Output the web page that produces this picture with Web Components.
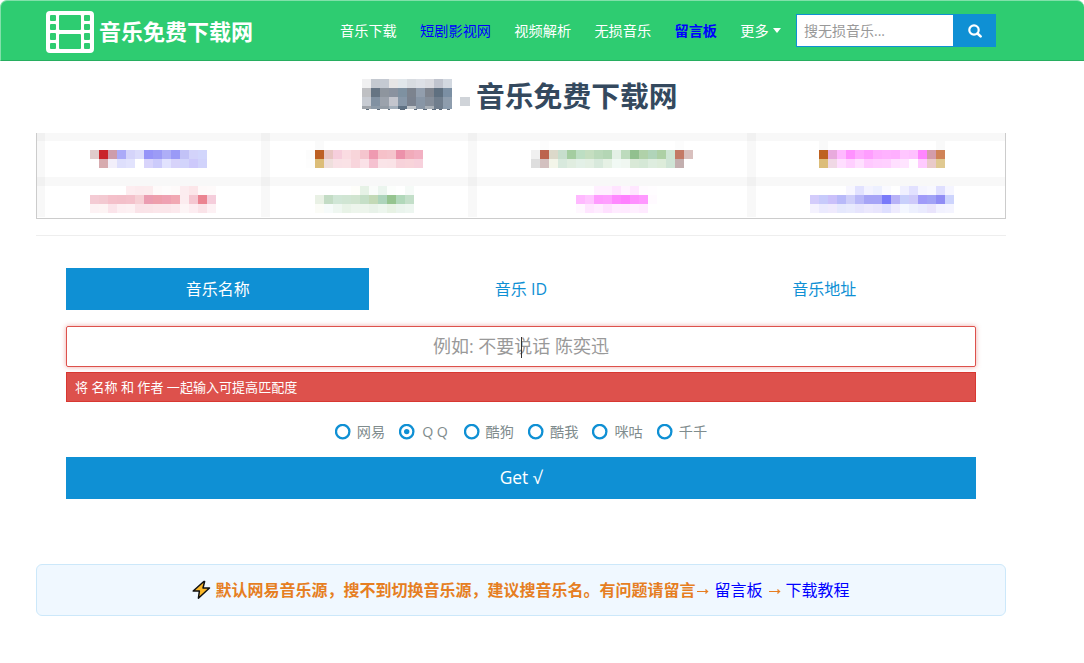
<!DOCTYPE html>
<html lang="zh-CN">
<head>
<meta charset="utf-8">
<title>音乐免费下载网</title>
<style>
  * { box-sizing: border-box; }
  body {
    margin: 0;
    background: #fff;
    color: #34495e;
    font-family: "Open Sans", "Noto Sans CJK SC", sans-serif;
    font-size: 16px;
    --blue: #0f90d4;
    --green: #2ecc71;
    --red: #dd514c;
  }
  main { display: block; width: 970px; margin-left: 36px; }
</style>
</head>
<body>
<site-header>
  <site-logo slot="logo">音乐免费下载网</site-logo>
  <nav-item>音乐下载</nav-item>
  <nav-item kind="link">短剧影视网</nav-item>
  <nav-item>视频解析</nav-item>
  <nav-item>无损音乐</nav-item>
  <nav-item kind="link strong">留言板</nav-item>
  <nav-item kind="more">更多</nav-item>
  <search-box slot="search" placeholder="搜无损音乐..."></search-box>
</site-header>
<main>
  <page-title>音乐免费下载网</page-title>
  <link-board></link-board>
  <search-form>
    <tab-item slot="tabs" active>音乐名称</tab-item>
    <tab-item slot="tabs">音乐 ID</tab-item>
    <tab-item slot="tabs">音乐地址</tab-item>
    <music-input slot="field" placeholder="例如: 不要说话 陈奕迅"></music-input>
    <form-alert slot="field">将 名称 和 作者 一起输入可提高匹配度</form-alert>
    <source-radio slot="sources">网易</source-radio>
    <source-radio slot="sources" checked wide>QQ</source-radio>
    <source-radio slot="sources">酷狗</source-radio>
    <source-radio slot="sources">酷我</source-radio>
    <source-radio slot="sources">咪咕</source-radio>
    <source-radio slot="sources">千千</source-radio>
    <submit-button slot="submit">Get √</submit-button>
  </search-form>
  <site-notice>
    默认网易音乐源，搜不到切换音乐源，建议搜音乐名。有问题请留言
    <notice-link slot="links" to="留言板"></notice-link>
    <notice-link slot="links" to="下载教程" spaced></notice-link>
  </site-notice>
</main>
<script>
"use strict";

const define = (name, render) => {
  customElements.define(name, class extends HTMLElement {
    constructor() {
      super();
      this.attachShadow({ mode: "open" });
    }

    connectedCallback() {
      this.shadowRoot.innerHTML = render(this);
    }
  });
};

// Draws runs of square cells; every run is [column, y, "color color ..."]
const drawCells = (runs, size = 9) => runs.map(([col, y, colors, h = size]) =>
  colors.split(" ").map((c, i) => c === "-" ? "" :
    `<rect x="${(col + i) * size}" y="${y}" width="${size}" height="${h}" fill="#${c}"/>`
  ).join("")
).join("");

define("site-header", () => `
  <style>
    :host {
      display: flex;
      align-items: center;
      box-sizing: border-box;
      height: 61px;
      padding-left: 45px;
      background: var(--green);
      border-top: 1px solid #82e0aa;
      border-left: 1px solid #82e0aa;
      border-bottom: 1px solid #27ae60;
      border-radius: 7px 7px 0 0;
    }
    .logo { width: 294px; }
    nav { display: flex; gap: 23.3px; width: 456px; }
  </style>
  <div class="logo"><slot name="logo"></slot></div>
  <nav><slot></slot></nav>
  <slot name="search"></slot>
`);

define("site-logo", () => `
  <style>
    :host {
      display: flex;
      align-items: center;
      gap: 5px;
      color: #fff;
      font-size: 22px;
      font-weight: bold;
      line-height: 42px;
      white-space: nowrap;
    }
    svg { display: block; margin-top: 2px; }
  </style>
  <svg width="48" height="42" viewBox="0 0 48 42">
    <path fill="#fff" fill-rule="evenodd" d="M4 0H44Q48 0 48 4V38Q48 42 44 42H4Q0 42 0 38V4Q0 0 4 0Z
      M5 4h4q1 0 1 1v4q0 1-1 1H5q-1 0-1-1V5q0-1 1-1Z M5 13h4q1 0 1 1v4q0 1-1 1H5q-1 0-1-1v-4q0-1 1-1Z
      M5 22h4q1 0 1 1v5q0 1-1 1H5q-1 0-1-1v-5q0-1 1-1Z M5 32h4q1 0 1 1v4q0 1-1 1H5q-1 0-1-1v-4q0-1 1-1Z
      M39 4h4q1 0 1 1v4q0 1-1 1h-4q-1 0-1-1V5q0-1 1-1Z M39 13h4q1 0 1 1v4q0 1-1 1h-4q-1 0-1-1v-4q0-1 1-1Z
      M39 22h4q1 0 1 1v5q0 1-1 1h-4q-1 0-1-1v-5q0-1 1-1Z M39 32h4q1 0 1 1v4q0 1-1 1h-4q-1 0-1-1v-4q0-1 1-1Z
      M14 4H34q1 0 1 1V18q0 1-1 1H14q-1 0-1-1V5q0-1 1-1Z M14 23H34q1 0 1 1V37q0 1-1 1H14q-1 0-1-1V24q0-1 1-1Z"/>
  </svg>
  <slot></slot>
`);

define("nav-item", el => {
  const kind = el.getAttribute("kind") || "";
  return `
    <style>
      :host {
        display: flex;
        align-items: center;
        gap: 4px;
        flex: none;
        color: ${kind.includes("link") ? "#00f" : "#fff"};
        font-size: 14.2px;
        font-weight: ${kind.includes("strong") ? "bold" : "normal"};
        line-height: 20px;
        white-space: nowrap;
      }
      i {
        border: solid transparent;
        border-width: 5px 4.5px 0;
        border-top-color: #fff;
      }
    </style>
    <slot></slot>${kind.includes("more") ? "<i></i>" : ""}
  `;
});

define("search-box", el => `
  <style>
    :host { display: flex; box-sizing: border-box; width: 200px; height: 33px; }
    .field {
      box-sizing: border-box;
      width: 157px;
      padding-left: 7px;
      border: 1px solid var(--blue);
      border-right: 0;
      background: #fff;
      color: #999;
      font-size: 14px;
      line-height: 32px;
    }
    .button {
      display: flex;
      align-items: center;
      justify-content: center;
      width: 43px;
      background: var(--blue);
    }
  </style>
  <div class="field">${el.getAttribute("placeholder")}</div>
  <div class="button">
    <svg width="14" height="14" viewBox="0 0 14 14" fill="none" stroke="#fff">
      <circle cx="6" cy="6" r="4.7" stroke-width="2.2"/>
      <path d="M9.5 9.5L12.6 12.4" stroke-width="2.6" stroke-linecap="round"/>
    </svg>
  </div>
`);

define("page-title", () => `
  <style>
    :host {
      display: flex;
      align-items: center;
      box-sizing: border-box;
      height: 72px;
      padding: 0 0 2px 326px;
      font-size: 28.8px;
      font-weight: bold;
      line-height: 40px;
      white-space: nowrap;
    }
    svg { display: block; margin: -4px 6px 0 0; }
  </style>
  <svg width="108" height="31" shape-rendering="crispEdges">
    ${drawCells([
      [0, 0, "f0f0f1 c4c9d0 c5cad2 e7e6e6 e1e7eb d8dce1 dde0e6 dadbe0 c0c4ce d2d8e0"],
      [0, 9, "bfc0c3 657483 8e959e 8a929f 7e91a1 7c838e 929ead 7e848e 5f7080 7b8fa3"],
      [0, 18, "c7cbd2 8191a2 9ba2ac c3c5cd 8797a8 7a828f 8896a6 858e9a 707e8d 8e9dad"],
      [0, 27, "9fa4aa 8c9aa8 929ba5 a3afbb 5f7183 c0c5ca 8996a5 aab1b8 6f7d8c 8c9dae", 3]
    ])}
    <path fill="#5c6b7b" d="M4 30h3v1h-3z M15 30h3v1h-3z M26 30h2v1h-2z M38 30h5v1h-5z M52 30h3v1h-3z M61 30h4v1h-4z M70 30h4v1h-4z M77 30h3v1h-3z M85 30h3v1h-3z"/>
    <rect x="98" y="18" width="10" height="9" fill="#d0d4d9"/>
  </svg>
  <slot></slot>
`);

define("link-board", () => `
  <style>
    :host { display: block; height: 103px; border-bottom: 1px solid #eee; box-sizing: border-box; }
    svg { display: block; }
  </style>
  <svg width="970" height="86" shape-rendering="crispEdges">
    <path fill="#f8f8f8" d="M0 0H970V8H0Z M0 44H970V53H0Z"/>
    <path fill="#000" fill-opacity=".027" d="M0 0H9V84H0Z M225 0H234V84H225Z M432 0H441V84H432Z M711 0H720V84H711Z"/>
    ${drawCells([
      [6, 17, "e0cccc c9252c cd9dab abaaf8 d5d4fa dcdcfb 9694f8 9c9bf6 aeaef7 9a9af7 c2c2f7 d3d3fa d2d6fc"],
      [7, 26, "d7abaf f2effa dedffc e2e3fd - d8d4fb cccbfb e1e2fe d7d3fa d2d4fb cdc9fb d1d3fb"],
      [10, 53, "fdedf0 fcebee fcecee fefafa fefcfc fefafa fcecef fce6e9 fef9f9 fefafa"],
      [6, 62, "f4cbd4 f3c9d1 f4c0ca f3bfc9 f4c1cb f6d0d5 eb9db1 ee9fac efa1b2 f1a8b3 fcecef f5c7d1 eb8491 f5cddb"],
      [6, 71, "fdf2f4 fdf4f4 fbe4ea fdeff2 fdf1f3 fae3e8 fae4e8 fbe6ea fbe6ea fce9ed fdf5f6 fdedf1 fae3e8 fdf1f4"],
      [31, 8, "fafafa"],
      [30, 17, "fcfcfc bd6023 e8c5c2 f6cedc fadce2 f8d5da f5c5ce ef9ab1 f6c1c9 f5c4cc ec91aa f1abba f2b0c2"],
      [30, 26, "fdfdfd dcbd78 efdfdd f9e1e6 fae2e6 f8d5dc fae1e7 f5c1d0 fae4e8 fae3e7 f7d2da f8d4da f7d1dc"],
      [35, 53, "fefefa e6f2e6 fafcfa ebf5ee fcfefc - f5faf7"],
      [31, 62, "e9f1e5 c3dcc5 d0e6d6 d0e5d3 d0e4cf c5dfc7 c3d9b6 add4bb 95c48f b1d8ba c3dfc9"],
      [31, 71, "fbfcf7 f6fbfa eff7f1 e8f3e7 edf5ec edf5ec e8f2e9 edf6ee e7f2e4 eaf4ed edf6f0"],
      [56, 8, "fcfcfc"], [71, 8, "fcfcfc"],
      [55, 17, "f0f0f0 bc644e dcd9ca c7decd a4cda0 bddec3 c5dec0 bad9ba b4d6b5 e4f0e6 bddbbd 91c08e b0d1a9 b0d4b9 add0a5 cee5d4 c37965 d9c0be"],
      [55, 26, "dedede d3c0bf f3f5e9 d8e9dd e0ede0 e3f0e7 e3efe3 d8e9dc e6f1e5 f1f9f4 f0f7f1 d9e9d7 d5e8d6 deeddf ddecda cfe4d5 c3afaf"],
      [62, 53, "fff0ff fff0ff ffe4ff fff4ff ffe7ff fffbff fffdff"],
      [60, 62, "ffb9ff ffc5ff ff9bff ff9fff ff88ff ff80ff ff90ff ff98ff fffaff"],
      [60, 71, "fff7ff ffe5ff ffecff ffe0ff ffebff ffeaff ffefff ffeaff"],
      [87, 8, "f9f9f9"], [100, 8, "f9f9f9"],
      [87, 17, "be6120 e8aadd ffb9ff ff91ff ffaaff ff9dff ffaeff ffb2ff ffafff ffc6ff ffc1ff ff86ff d39caa d08357"],
      [87, 26, "dcbd79 f0d8e5 ffdeff ffcfff ffe0ff ffc9ff ffceff ffd0ff ffdfff ffe4ff fffcff ffcaff e9cac9 e0c991"],
      [90, 53, "f7f6ff e2e2ff f3f3ff edf0ff fafaff - f0f0ff e2e1ff f5f5ff f8f8ff dfdfff f5f5ff"],
      [86, 62, "d3ccfb c7cafb cac0fa b8b9f9 cecef9 b9b8f8 a6a4f6 a6a4f7 797afa b8b2f7 c8cffb cecafa a09bf9 a1a2f6 908df5 cdd4fd"],
      [86, 71, "f4f2fe ebeafe efeafd e5e8fd e8eafd e6e4fd ebe8fd e8e5fd dedfff eeebfe f4f7ff edf0fe eaebfe e9e4fc f2f2ff f4f4ff"]
    ])}
    <path fill="none" stroke="#ccc" d="M.5 0V85.5H969.5V0"/>
  </svg>
`);

define("search-form", () => `
  <style>
    :host { display: block; padding: 32px 30px 0; }
    .tabs { display: flex; margin-bottom: 16px; }
    .sources { display: flex; justify-content: center; gap: 14px; margin: 20px 0 15px; }
  </style>
  <div class="tabs"><slot name="tabs"></slot></div>
  <slot name="field"></slot>
  <div class="sources"><slot name="sources"></slot></div>
  <slot name="submit"></slot>
`);

define("tab-item", () => `
  <style>
    :host {
      flex: 1;
      height: 42px;
      color: var(--blue);
      font-size: 16px;
      line-height: 42px;
      text-align: center;
    }
    :host([active]) { background: var(--blue); color: #fff; }
  </style>
  <slot></slot>
`);

define("music-input", el => `
  <style>
    :host {
      display: block;
      position: relative;
      box-sizing: border-box;
      height: 41px;
      margin-bottom: 5px;
      border: 1px solid var(--red);
      border-radius: 2px;
      box-shadow: 0 0 5px rgba(221, 81, 76, .5);
      color: #999;
      font-size: 18px;
      line-height: 39px;
      text-align: center;
    }
    .caret {
      position: absolute;
      left: 50%;
      top: 10px;
      width: 1px;
      height: 21px;
      background: #333;
    }
  </style>
  <span>${el.getAttribute("placeholder")}</span><i class="caret"></i>
`);

define("form-alert", () => `
  <style>
    :host {
      display: block;
      box-sizing: border-box;
      height: 30px;
      padding-left: 8px;
      border: 1px solid #d83832;
      background: var(--red);
      color: #fff;
      font-size: 13.05px;
      line-height: 28px;
    }
  </style>
  <slot></slot>
`);

define("source-radio", el => `
  <style>
    :host {
      display: flex;
      align-items: center;
      gap: 6px;
      color: #7f8c8d;
      font-size: 14.2px;
      line-height: 20px;
      white-space: nowrap;
    }
    :host([wide]) .label { box-sizing: border-box; width: 28.4px; padding-left: 1px; letter-spacing: 3.4px; }
    svg { display: block; }
    .label { display: block; }
  </style>
  <svg width="16" height="16" viewBox="0 0 16 16">
    <circle cx="7.7" cy="7.6" r="6.7" fill="none" stroke="#0f90d4" stroke-width="2.3"/>
    ${el.hasAttribute("checked") ? '<circle cx="7.7" cy="7.6" r="2.7" fill="#0f90d4"/>' : ""}
  </svg>
  <span class="label"><slot></slot></span>
`);

define("submit-button", () => `
  <style>
    :host {
      display: block;
      height: 42px;
      background: var(--blue);
      color: #fff;
      font-size: 17.4px;
      line-height: 41px;
      text-align: center;
    }
  </style>
  <slot></slot>
`);

define("site-notice", () => `
  <style>
    :host {
      display: flex;
      align-items: center;
      justify-content: center;
      box-sizing: border-box;
      height: 52px;
      margin-top: 65px;
      border: 1px solid #cce8fa;
      border-radius: 6px;
      background: #f0f8ff;
      color: #e67e22;
      font-size: 16px;
      line-height: 24px;
      white-space: nowrap;
    }
    svg { display: block; margin-right: 4px; }
    b { font-weight: bold; }
  </style>
  <svg width="19" height="20" viewBox="0 0 19 20">
    <path d="M11.8 1.5L1.2 11H7.4L6.4 18.2L17.5 8H11L12.6 1.5Z" fill="#fbb829" stroke="#111" stroke-width="1.5" stroke-linejoin="round"/>
  </svg>
  <b><slot></slot></b>
  <slot name="links"></slot>
`);

define("notice-link", el => `
  <style>
    :host { display: flex; align-items: center; }
    :host([spaced]) { margin-left: 4px; }
    svg { display: block; margin: 2px 5px 0 2px; }
    a { color: #00f; }
  </style>
  <svg width="12" height="8" viewBox="0 0 12 8" fill="none" stroke="#e67e22">
    <path d="M0 4.5H11"/><path d="M8.5 2L11 4.5L8.5 7" fill="#e67e22" stroke-width=".5"/>
  </svg>
  <a>${el.getAttribute("to")}</a>
`);
</script>
</body>
</html>
